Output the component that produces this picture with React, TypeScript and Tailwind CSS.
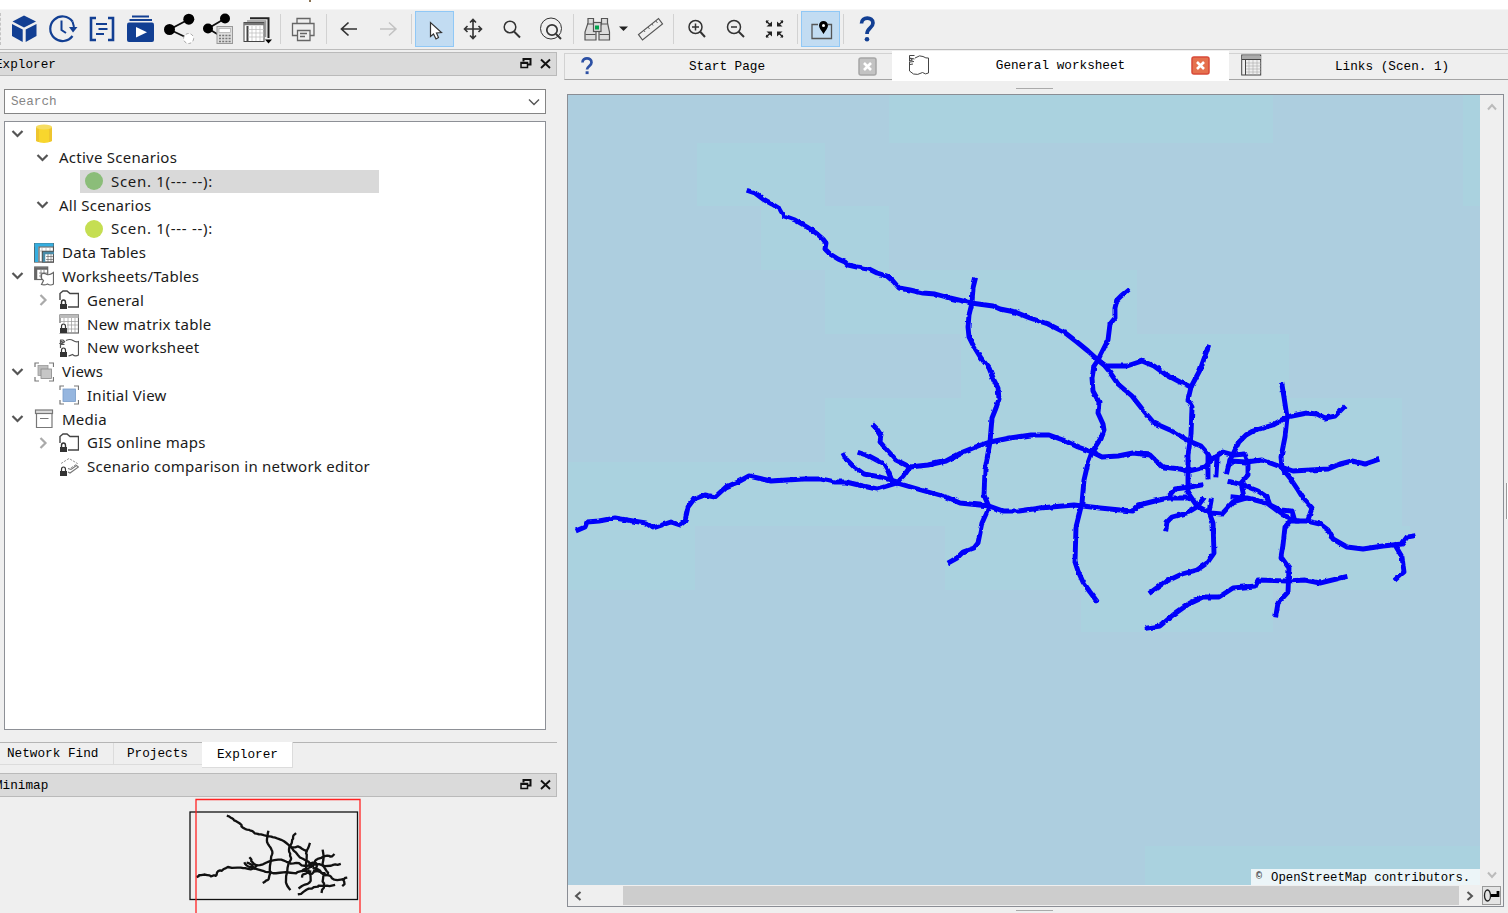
import type { ReactNode } from "react";

const NAVY = "#123f93";

const ROADS = [
  "749,191 755,193 763,199 772,204 780,209 784,216 795,220 807,227 816,233 823,239 826,243 825,249 830,254 838,259 845,262 848,265 857,267 869,269 877,273 887,276 893,281 899,288 910,290 923,293 935,294 950,298 971,303 993,306 1000,309 1015,312 1030,318 1048,324 1064,332 1077,342 1088,351 1098,360 1104,365 1109,371 1118,384 1132,396 1143,410 1154,423 1170,430 1189,441 1201,446 1208,454 1211,460",
  "975,280 973,288 972,303 969,315 968,327 969,337 973,345 981,358 989,368 994,380 998,388 999,399 996,408 992,418 990,442 985,470 984,495 989,507 982,523 978,543 974,548 963,552 957,558 950,562",
  "578,530 585,527 587,522 599,521 615,518 633,521 646,523 653,528 662,525 671,522 680,525 685,521 688,507 694,499 705,495 715,497 726,487 738,482 749,476 771,481 803,479 821,479 835,482 846,482 863,486 877,489 897,483 921,490 946,497 960,503 989,506 1003,511 1019,511 1040,508 1074,505 1100,508 1120,510 1133,511 1139,505 1155,501 1168,498 1189,498",
  "897,483 903,477 910,467 928,465 946,461 963,452 978,446 990,442 1010,438 1031,435 1049,435 1063,440 1078,447 1092,452 1102,457 1118,456 1133,453 1150,455 1155,460 1163,467 1180,469 1189,471 1205,467 1211,461",
  "874,426 877,429 881,435 880,442 887,450 896,460 910,467",
  "844,455 846,459 854,467 864,474 880,477 894,481",
  "860,453 869,456 884,464 888,471 892,481",
  "1127,291 1121,296 1117,300 1115,308 1115,318 1110,324 1108,340 1098,360 1094,366 1092,378 1093,391 1099,402 1098,413 1103,424 1104,430 1101,438 1092,452 1088,463 1084,480 1082,503 1076,527 1075,562 1078,571 1083,582 1090,592 1096,600",
  "1098,360 1106,366 1127,366 1142,361 1154,366 1165,374 1180,382 1191,387",
  "1208,347 1205,356 1200,370 1191,387 1188,400 1192,407 1191,435 1188,455 1188,493 1197,506 1210,513 1222,514 1233,502 1247,498 1267,503 1283,515 1297,521 1307,521 1320,524 1328,530 1333,539 1347,547 1363,549 1383,546 1402,544 1407,537 1413,536",
  "1395,545 1402,557 1404,572 1396,579",
  "1282,385 1284,397 1287,417 1285,437 1281,457 1282,468 1290,478 1298,490 1303,498 1312,508 1308,520",
  "1227,472 1230,460 1239,442 1246,435 1253,431 1273,425 1287,417 1307,413 1317,414 1325,418 1335,416 1343,408",
  "1230,461 1246,462 1262,460 1281,467 1293,471 1328,469 1340,464 1352,461 1365,464 1377,460",
  "1211,460 1215,457 1223,452 1234,455 1245,454 1248,462 1248,475 1241,483 1244,497",
  "1208,457 1208,477",
  "1217,459 1216,475",
  "1231,482 1243,485 1258,491 1267,497 1270,505 1280,510 1292,511 1294,518",
  "1233,497 1244,498",
  "1201,485 1190,487 1175,489 1168,497",
  "1203,499 1197,507 1187,513 1172,517 1167,522 1166,529",
  "1211,501 1209,512 1213,523 1214,553 1207,563 1197,570 1182,574 1165,582 1151,592",
  "1297,521 1290,521 1285,527 1283,545 1281,557 1289,568 1288,592 1278,603 1276,615",
  "1148,628 1160,626 1173,615 1190,603 1203,597 1219,597 1233,588 1255,586 1258,580 1287,581 1305,580 1320,583 1345,577",
];

const LIGHT_TILES = [
  [889, 95, 384, 48], [1463, 95, 17, 111], [697, 143, 128, 63], [761, 206, 128, 64], [825, 270, 312, 64],
  [961, 334, 328, 64], [825, 398, 577, 64], [567, 462, 835, 64],
  [567, 526, 128, 64], [945, 526, 465, 64], [1081, 590, 192, 42], [1145, 846, 335, 40],
];

function Roads({ color, width, rough }: { color: string; width: number; rough?: boolean }) {
  return (
    <g fill="none" stroke={color} strokeWidth={width} strokeLinejoin="round" strokeLinecap="square" filter={rough ? "url(#rough)" : undefined}>
      {ROADS.map((p) => <polyline key={p} points={p} />)}
    </g>
  );
}

function Tool({ x, w = 38, on, children }: { x: number; w?: number; on?: boolean; children: ReactNode }) {
  return (
    <div className={on ? "h-[36px] shrink-0 border border-[#90c8f6] bg-[#c2dcf2]" : "h-[36px] shrink-0"} style={{ width: w }}>
      <svg className={on ? "-mt-px -ml-px block overflow-visible" : "block overflow-visible"} width={w} height={36} viewBox={`${x} 11 ${w} 36`} fill="none" stroke="#333" strokeWidth="1.5">
        {children}
      </svg>
    </div>
  );
}

function Sep({ w = 8 }: { w?: number }) {
  return <div className="flex shrink-0 justify-center" style={{ width: w }}><div className="h-[30px] w-px bg-[#d2d2d2]" /></div>;
}

function Toolbar() {
  return (
    <div className="flex h-[41px] items-center border-t border-b border-t-[#f6f6f6] border-b-[#bcbcbc] bg-[#efefef] pb-[2px]">
      <div className="h-[32px] w-[5px] shrink-0"><div className="h-full w-px border-l border-dashed border-[#c4c4c4]" /></div>
      <Tool x={5} w={39}>
        <g fill={NAVY} stroke="none"><path d="M24 15.5 36 21.5 24 27.5 12.500 21.500Z" /><path d="M12 24 22.700 29.500V42L12 36Z" /><path d="M36.500 24 25.700 29.500V42L36.500 36Z" /></g>
      </Tool>
      <Tool x={44}>
        <path d="M72.500 21.500A12.300 12.300 0 1 0 72.500 36" stroke={NAVY} strokeWidth="2.200" /><path d="M72.500 21.500 74 27" stroke={NAVY} strokeWidth="2" /><path d="M69 27h8.500l-4.500 5.500Z" fill={NAVY} stroke="none" /><path d="M61.500 20.500V30l4.500 3" stroke={NAVY} strokeWidth="2" />
      </Tool>
      <Tool x={82} w={39}>
        <path d="M96 18H91V40h5M108 18h5V40h-5" stroke={NAVY} strokeWidth="2.600" /><path d="M96 24h11M98.500 29h9M96 34h8" stroke={NAVY} strokeWidth="2" />
      </Tool>
      <Tool x={121} w={39}>
        <path d="M132 16.500h17M129.500 20h22.500" stroke={NAVY} strokeWidth="2" /><rect x="127" y="22.500" width="27" height="19.500" rx="2" fill={NAVY} stroke="none" /><path d="M136 27v10.500l11-5.200Z" fill="#fff" stroke="none" />
      </Tool>
      <Tool x={160} w={39}>
        <path d="M188.500 19.500 169.500 29.500 188.500 38.500" stroke="#111" strokeWidth="1.800" /><circle cx="188.800" cy="19.200" r="5.500" fill="#000" stroke="none" /><circle cx="169.500" cy="29.500" r="5.500" fill="#000" stroke="none" /><circle cx="188.600" cy="38.500" r="5" fill="#fff" stroke="#aaa" strokeWidth="1" strokeDasharray="3 2" />
      </Tool>
      <Tool x={199}>
        <path d="M225 18.500 208 28.500l10 6" stroke="#111" strokeWidth="1.800" /><circle cx="225" cy="18.500" r="5" fill="#000" stroke="none" /><circle cx="208" cy="28.500" r="5" fill="#000" stroke="none" />
        <rect x="217" y="26.500" width="15.500" height="17" fill="#ddd" stroke="#999" strokeWidth="1" /><rect x="219" y="28.500" width="11.500" height="4" fill="#fff" stroke="#aaa" strokeWidth=".7" />
        <path d="M219 35.500h12M219 38.500h12M219 41.500h12" stroke="#777" strokeDasharray="2 1.200" />
      </Tool>
      <Tool x={237} w={39}>
        <path d="M250 18.200h18.500V38" stroke="#222" strokeWidth="2" /><path d="M247 21h18.500v16" stroke="#999" /><rect x="244" y="22.500" width="20" height="19" fill="#fff" stroke="#444" strokeWidth="1" /><path d="M244 24h20" stroke="#777" strokeWidth="2.500" /><path d="M247.500 26v15" stroke="#444" strokeWidth="2" /><path d="M248 29.500h16M248 33h16M248 37h16M252 26v15M256 26v15M260 26v15" stroke="#bbb" strokeWidth=".7" /><path d="M265 39.500h7l-3.500 4Z" fill="#000" stroke="none" />
      </Tool>
      <Sep />
      <Tool x={284}>
        <g stroke="#666" strokeWidth="1.300"><path d="M297 23.500V18.500h13v5" /><path d="M297.500 35.500H292.500V23.500h21.500v12h-4" /><path d="M297.500 30.500h12.500v10h-12.500ZM300 33.500h7M300 36.500h5" /></g>
      </Tool>
      <Sep />
      <Tool x={330}><path d="M357 29H342M348.500 22.500 341.500 29l7 6.500" strokeWidth="1.700" /></Tool>
      <Tool x={368} w={39}><path d="M380 29h15.500M389 22.500l7 6.500-7 6.500" stroke="#c2c2c2" /></Tool>
      <Sep />
      <Tool x={415} w={39} on><path d="M430.500 22.500V36.500l3-2.500 2.500 5 2.500-1.500-2-4.500 5-.5Z" fill="#fff" strokeWidth="1.200" /></Tool>
      <Tool x={454} w={39}><path d="M464.500 29h17M473 20v18M467.500 26l-3 3 3 3M478.500 26l3 3-3 3M470 22.500l3-3 3 3M470 35.500l3 3 3-3" strokeWidth="1.600" /></Tool>
      <Tool x={493}><circle cx="510" cy="27" r="5.800" /><path d="M514 31.500l6 6" strokeWidth="2" /></Tool>
      <Tool x={531}><circle cx="551" cy="28.500" r="10.500" strokeWidth="1" /><circle cx="552" cy="30" r="5.200" strokeWidth="1.700" /><path d="M556 34l5 5" strokeWidth="2" /></Tool>
      <Sep />
      <Tool x={577} w={39}>
        <g stroke="#555" strokeWidth="1.200" fill="#dcdcdc"><path d="M588 18.500h5.500v5l2.500 6V40H585V32l3-9ZM607.500 18.500H601.500v5l-2.500 6V40h10.500V32l-2-9Z" /><path d="M587 24h6M601.500 24h6M585.500 34.500h10M599.500 34.500h10" /><rect x="593.500" y="22.500" width="7.500" height="9" /></g><rect x="595" y="25.500" width="4" height="4" fill="#00a24d" stroke="none" />
      </Tool>
      <Tool x={616} w={15}><path d="M619 26.500h9l-4.500 4.500Z" fill="#222" stroke="none" /></Tool>
      <Tool x={631}><path d="M658.500 18.500l4 5.500-20 16-4-5.500Z" stroke="#555" strokeWidth="1.200" /><path d="M656 21l1.500 2M652 24l1 1.500M648 27l1.500 2M644 30.500l1 1.500" stroke="#666" strokeWidth="1" /></Tool>
      <Sep />
      <Tool x={677} w={39}><circle cx="695.500" cy="27" r="6.500" /><path d="M700 31.500l5 5.500" strokeWidth="2" /><path d="M692 27h7M695.500 23.500v7" /></Tool>
      <Tool x={716}><circle cx="734" cy="27" r="6.500" /><path d="M738.500 31.500l5.500 5.500" strokeWidth="2" /><path d="M731 27h6" /></Tool>
      <Tool x={754} w={39}><path d="M766 21l5 4.500M783 21l-5 4.500M766 37l5-4.500M783 37l-5-4.500" stroke="#222" /><path d="M772 21.500v5h-5.500ZM777 26.500h5.500l-5.500-5ZM772 31.500v5l-5.500-5ZM777 31.500h5.500l-5.500 5ZM766 20.500h3l-3 3ZM783 20.500h-3l3 3ZM766 37.500h3l-3-3ZM783 37.500h-3l3-3Z" fill="#222" stroke="none" /></Tool>
      <Sep />
      <Tool x={801} w={39} on><path d="M818 24.500h-6V38.500h19.500V24.500h-3.500" stroke="#555" strokeWidth="1.300" /><path d="M823.500 34c-2.500-4-4.500-6-4.500-8.500a4.500 4.500 0 0 1 9 0c0 2.500-2 4.500-4.500 8.500Z" fill="#000" stroke="none" /><circle cx="823.500" cy="25.500" r="1.500" fill="#fff" stroke="none" /></Tool>
      <Sep w={7} />
      <Tool x={847}><path d="M861.500 23.500c0-7 11.500-7 11.500-.5 0 5-6 5-6 11" stroke={NAVY} strokeWidth="3.700" /><circle cx="867" cy="39.200" r="2.300" fill={NAVY} stroke="none" /></Tool>
    </div>
  );
}

function DockHeader({ title }: { title: string }) {
  return (
    <div className="flex h-[24px] w-[557px] items-center border border-l-0 border-[#bababa] bg-[#dadada] pr-[5px]">
      <span className="-ml-[5px] flex-1 pt-px">{title}</span>
      <svg width="32" height="14" viewBox="519 57 32 14" fill="none" stroke="#111" strokeWidth="1.500">
        <path d="M523.500 61.500V59h7v5.500H528" strokeWidth="2" /><rect x="521" y="62.500" width="6.500" height="5" /><path d="M521 63h6.500" strokeWidth="2" /><path d="M541 59.500l9 8.500M550 59.500l-9 8.500" strokeWidth="1.900" />
      </svg>
    </div>
  );
}

const lock = <g><path d="M2.500 15v-2.500q0-2.500 2-2.500t2 2.500V15" stroke="#333" fill="none" /><rect x="1" y="14" width="7" height="5" fill="#333" stroke="none" /></g>;
const sheet = <path d="M7 2.500q4-2 7 0t5.500 1V17q-3 2-6-.5-2 1-4 1.500M1.500 10V3l3 1.500-3 1 4 1M1 2h3l2 2" />;
const brackets = <path d="M1 5V1h4M15 1h4.500v4M19.500 15v4H15M5 19H1v-4" stroke="#777" />;
const icons: Record<string, ReactNode> = {
  db: <g stroke="none"><path d="M2 3v14q8 4 16 0V3Z" fill="#f8d62d" /><path d="M2 3v14l3 1V3ZM15 3v15l3-1V3Z" fill="#eec52f" /><ellipse cx="10" cy="3" rx="8" ry="2.500" fill="#f6dd62" /></g>,
  green: <circle cx="10" cy="10" r="9" fill="#8bbd79" stroke="none" />,
  lime: <circle cx="10" cy="10" r="9" fill="#c5de52" stroke="none" />,
  data: <g><rect x=".5" y=".5" width="19" height="18.500" fill="#fff" /><path d="M.5 2h19M2.500 2v17" stroke="#35aee0" strokeWidth="3.500" /><path d="M5 3.500v15M5 4h15" /><path d="M8 4v15M12 4v4M16 4v4M5 8h14" stroke="#aaa" strokeWidth=".7" /><rect x="8.500" y="8.500" width="11" height="10.500" fill="#fff" /><path d="M9 10h11M10 10v9" stroke="#4a8ca8" strokeWidth="2.500" /><path d="M12 13.500h7M12 16.500h7M14 11v8M17 11v8" strokeWidth=".6" /></g>,
  sheets: <g stroke="#666"><rect x=".7" y="1" width="13" height="12.500" fill="#fff" /><path d="M1 2.500h13M2 2v11" strokeWidth="2.500" /><path d="M5 7h8M5 10h7M7 4v8M10 4v8" strokeWidth=".7" /><path d="M7.500 8q2.500-1.500 5 .2t7-1.700V18q-3 2-6 0-3 1.500-6 .5l2-4-2-2Z" fill="#fff" /></g>,
  folder: <g stroke="#444" strokeWidth="1.400"><path d="M1 10V3.500l3-2.500h4l3 2.500h8.500V17H9" />{lock}</g>,
  matrix: <g><rect x="1" y="1" width="18.500" height="18" fill="#fff" stroke="#666" /><path d="M1 2.500h18.500" stroke="#bbb" strokeWidth="3" /><path d="M5 4v14M9 4v15M12.500 4v15M16 4v15M1 7.500h18M6 11h13M8 15h11" stroke="#999" strokeWidth=".7" /><rect x="0" y="9" width="8" height="10" fill="#fff" stroke="none" />{lock}</g>,
  worksheet: <g>{sheet}{lock}</g>,
  views: <g>{brackets}<rect x="4" y="3.500" width="10" height="10" fill="#bdbdbd" stroke="#999" strokeWidth=".8" /><rect x="7" y="7" width="10.500" height="9.500" fill="#c6c6c6" stroke="#888" strokeWidth=".8" /></g>,
  view: <g>{brackets}<rect x="4" y="4" width="12.500" height="12.500" fill="#96b6df" stroke="#779bc8" strokeWidth=".8" /></g>,
  media: <g stroke="#777"><rect x="1.500" y="1" width="17" height="3.500" fill="#ddd" /><path d="M2.500 4.500v14h15.500v-14M6 9.500h8.500" /></g>,
  layers: <g><path d="M2 6.500l8-5 8.500 5L11 11.500" stroke="#999" strokeDasharray="2.500 1" strokeWidth="1" /><path d="M9 15l2 1 8.500-6-2-1.500-5.500 4-3-1" stroke="#777" strokeWidth="1.100" />{lock}</g>,
};

type Row = { label: string; icon?: string; chevron?: "down" | "right"; level: number; selected?: boolean };
const ROWS: Row[] = [
  { label: "", icon: "db", chevron: "down", level: 0 },
  { label: "Active Scenarios", chevron: "down", level: 1 },
  { label: "Scen. 1(--- --):", icon: "green", level: 2, selected: true },
  { label: "All Scenarios", chevron: "down", level: 1 },
  { label: "Scen. 1(--- --):", icon: "lime", level: 2 },
  { label: "Data Tables", icon: "data", level: 0 },
  { label: "Worksheets/Tables", icon: "sheets", chevron: "down", level: 0 },
  { label: "General", icon: "folder", chevron: "right", level: 1 },
  { label: "New matrix table", icon: "matrix", level: 1 },
  { label: "New worksheet", icon: "worksheet", level: 1 },
  { label: "Views", icon: "views", chevron: "down", level: 0 },
  { label: "Initial View", icon: "view", level: 1 },
  { label: "Media", icon: "media", chevron: "down", level: 0 },
  { label: "GIS online maps", icon: "folder", chevron: "right", level: 1 },
  { label: "Scenario comparison in network editor", icon: "layers", level: 1 },
];
const INDENT = ["w-[4px]", "w-[29px]", "w-[54px]"];

function Tree() {
  return (
    <div className="mt-[7px] ml-[4px] h-[609px] w-[542px] border border-[#8d9096] bg-white font-['Noto_Sans',sans-serif] text-[15px]">
      {ROWS.map((r, i) => (
        <div key={i} className="flex h-[23.770px] items-center">
          <div className={`shrink-0 ${INDENT[r.level]}`} />
          <svg className="mr-[4px] shrink-0" width="17" height="16" viewBox="0 0 17 16" fill="none" strokeWidth="2.200">
            {r.chevron === "down" && <path d="M3.500 5l5 5 5-5" stroke="#555" />}
            {r.chevron === "right" && <path d="M6.500 3l5 5-5 5" stroke="#aaa" />}
          </svg>
          <div className={r.selected ? "flex h-[23px] w-[299px] items-center bg-[#d9d9d9] pl-[4px]" : "flex h-[23px] items-center pl-[4px]"}>
            {r.icon && <svg className={r.level === 2 ? "mr-[7px] shrink-0" : "mr-[8px] shrink-0"} width="20" height="20" viewBox="0 0 20 20" fill="none" stroke="#555" strokeWidth="1.200">{icons[r.icon]}</svg>}
            <span className={r.level === 2 ? "whitespace-pre pb-px tracking-[0.7px] text-[#1a1a1a]" : "whitespace-pre pb-px tracking-[0.26px] text-[#1a1a1a]"}>{r.label}</span>
          </div>
        </div>
      ))}
    </div>
  );
}

function LeftPanel() {
  return (
    <div className="flex w-[564px] shrink-0 flex-col overflow-hidden pt-[2px]">
      <DockHeader title="Explorer" />
      <div className="mt-[13px] ml-[4px] flex h-[25px] w-[542px] items-center border border-[#858585] bg-white pr-[4px] pl-[6px]">
        <span className="flex-1 text-[#858585]">Search</span>
        <svg width="14" height="10" viewBox="0 0 14 10" fill="none" stroke="#555" strokeWidth="1.400"><path d="M2 2.500l5 5 5-5" /></svg>
      </div>
      <Tree />
      <div className="mt-[12px] flex h-[26px] w-[557px] items-start border-t border-[#b5b5b5]">
        <div className="h-[22px] w-[114px] border-r border-b border-[#dcdcdc] pl-[7px] leading-[22px]">Network Find</div>
        <div className="h-[22px] w-[88px] border-b border-[#dcdcdc] pl-[13px] leading-[22px]">Projects</div>
        <div className="-mt-px h-[26px] w-[91px] border-r border-b border-[#dcdcdc] bg-white pl-[15px] leading-[26px]">Explorer</div>
      </div>
      <div className="mt-[5px]"><DockHeader title="Minimap" /></div>
      <svg className="block shrink-0" width="557" height="116" viewBox="0 797 557 116">
        <rect x="190" y="812" width="167.500" height="87.500" fill="none" stroke="#111" strokeWidth="1.300" />
        <g transform="translate(94.600 781.800) scale(.178 .179)"><Roads color="#111" width={13} /></g>
        <path d="M196 913V799.500H360V913" fill="none" stroke="#f22" strokeWidth="1.300" />
      </svg>
    </div>
  );
}

function Close({ active }: { active?: boolean }) {
  return (
    <svg width="19" height="19" viewBox="0 0 19 19"><rect x="1" y="1" width="17" height="17" rx="2" fill={active ? "#e5714e" : "#c3c3c3"} stroke={active ? "#d84a38" : "#a6a6a6"} strokeWidth="1.500" /><path d="M6 6l7 7M13 6l-7 7" stroke="#fff" strokeWidth="2.600" /></svg>
  );
}

function Tabs() {
  return (
    <div className="flex h-[30px] w-full overflow-hidden">
      <div className="mt-[2px] flex h-[27px] w-[328px] shrink-0 items-center border-t border-b border-l border-t-[#d2d2d2] border-b-[#a4a4a4] border-l-[#d2d2d2] pr-[15px] pl-[16px]">
        <svg className="mb-[2px]" width="13" height="18" viewBox="0 0 13 18" fill="none" stroke="#2c50a4" strokeWidth="2.700"><path d="M1.500 5.500c0-5.500 9-5.500 9 0 0 3.500-4.500 4-4.500 7" /><path d="M4.600 15.700h3" strokeWidth="2.800" /></svg>
        <span className="flex-1 pt-px pl-[2px] text-center">Start Page</span>
        <Close />
      </div>
      <div className="flex h-[30px] w-[337px] shrink-0 items-center bg-white pr-[19px] pb-[2px] pl-[16px]">
        <svg width="22" height="22" viewBox="0 0 22 22" fill="none" stroke="#444" strokeWidth="1"><path d="M1.500 1.500h5M7 4q5-3.500 8-1.500t5.500 1.500v15q-3 2-6-.5-5 3-9 1.500L1.500 17V7.500M1.500 1.500V7l3-1-3-2 5 1M2 8l4-.5M2 10.500l3-.5" /></svg>
        <span className="flex-1 pt-[2px] text-center">General worksheet</span>
        <Close active />
      </div>
      <div className="mt-[2px] flex h-[27px] flex-1 items-center border-t border-b border-t-[#d2d2d2] border-b-[#a4a4a4] pl-[12px]">
        <svg className="mb-[3px]" width="21" height="22" viewBox="0 0 21 22" fill="none" stroke="#444"><rect x=".7" y="1" width="19" height="20" /><path d="M1 3.500h19" stroke="#aaa" strokeWidth="3" /><path d="M1 5.500h19M4.500 5.500V21" /><path d="M5 9h15M5 12h15M5 15h15M5 18h15M8 6v15M12 6v15M16 6v15" stroke="#aaa" strokeWidth=".6" /></svg>
        <span className="ml-[73px] whitespace-pre pt-px">Links (Scen. 1)</span>
      </div>
    </div>
  );
}

function Arrow({ d, light }: { d: string; light?: boolean }) {
  return <svg width="12" height="12" viewBox="0 0 12 12" fill="none" stroke={light ? "#bbb" : "#555"} strokeWidth="2"><path d={d} /></svg>;
}

function MapView() {
  return (
    <div className="ml-[3px] flex h-[813px] w-[937px] flex-col border border-[#8a8d94]">
      <div className="flex h-[790px]">
        <div className="relative w-[912px] overflow-hidden bg-[#adcedf]">
          <svg className="block" width="912" height="790" viewBox="568 95 912 790">
            <defs>
              <filter id="rough" x="-5%" y="-5%" width="110%" height="110%">
                <feTurbulence type="fractalNoise" baseFrequency=".16" numOctaves="2" seed="4" />
                <feDisplacementMap in="SourceGraphic" scale="3" xChannelSelector="R" yChannelSelector="G" />
              </filter>
            </defs>
            {LIGHT_TILES.map(([x, y, w, h]) => <rect key={`${x}-${y}`} x={x} y={y} width={w} height={h} fill="#aad2df" />)}
            <Roads color="#0505fb" width={4.9} rough />
          </svg>
          <div className="absolute right-0 bottom-0 flex h-[16px] w-[229px] items-center bg-[#ecf5f8]">
            <span className="w-[20px] pl-[5px] text-[10px]">©</span><span className="pt-px text-[12.300px]">OpenStreetMap contributors.</span>
          </div>
        </div>
        <div className="flex flex-1 flex-col items-center justify-between bg-[#efefef] pt-[6px] pb-[4px]">
          <Arrow d="M2 8.500l4-4.500 4 4.500" light /><Arrow d="M2 3.500l4 4.500 4-4.500" light />
        </div>
      </div>
      <div className="flex h-[21px] items-center bg-[#efefef] pl-[4px]">
        <Arrow d="M8.500 2l-4.500 4 4.500 4" />
        <div className="ml-[39px] h-[19px] w-[836px] bg-[#cdcdcd]" />
        <div className="ml-[5px]"><Arrow d="M3.500 2l4.500 4-4.500 4" /></div>
        <svg className="ml-[6px]" width="19" height="19" viewBox="0 0 19 19" fill="#e4e4e4" stroke="#999"><rect x=".5" y=".5" width="18" height="18" /><ellipse cx="5.500" cy="9.500" rx="3" ry="5.500" fill="none" stroke="#222" strokeWidth="1.300" /><path d="M9 9.500h7V5" fill="none" stroke="#000" strokeWidth="2.800" /></svg>
      </div>
    </div>
  );
}

export default function App() {
  return (
    <div className="flex h-[913px] w-[1508px] flex-col overflow-hidden bg-[#efefef] font-['Liberation_Mono',monospace] text-[12.700px] leading-[16px] text-black">
      <div className="h-[9px] shrink-0 bg-white"><div className="ml-[309px] h-[2px] w-[2px] bg-[#8b7355]" /></div>
      <Toolbar />
      <div className="flex min-h-0 flex-1">
        <LeftPanel />
        <div className="flex min-w-0 flex-1 flex-col pt-px">
          <Tabs />
          <div className="flex h-[13px] items-center pl-[452px]"><div className="mt-[2px] h-px w-[37px] bg-[#aaa]" /></div>
          <div className="flex">
            <MapView />
            <div className="ml-[2px] flex flex-1 items-center"><div className="h-[36px] w-[2px] border-l border-[#999] bg-white" /></div>
          </div>
          <div className="mt-[3px] ml-[452px] h-px w-[37px] bg-[#aaa]" />
        </div>
      </div>
    </div>
  );
}
